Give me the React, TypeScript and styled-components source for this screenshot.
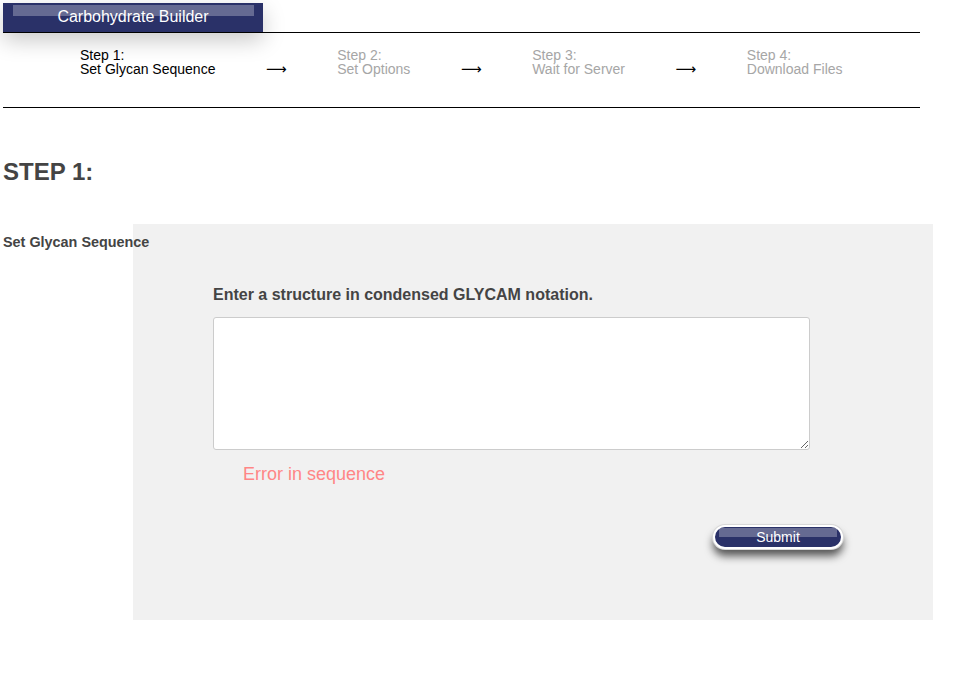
import React, { useState } from 'react';
import styled, { createGlobalStyle } from 'styled-components';

const GlobalStyle = createGlobalStyle`
  body {
    margin: 0;
    background: #fff;
    font-family: "Liberation Sans", Arial, sans-serif;
  }
`;

const Page = styled.div`
  padding: 3px;
`;

const Tab = styled.div`
  position: relative;
  z-index: 1;
  width: 260px;
  height: 29px;
  background: #2a3168;
  box-shadow: 0 8px 22px rgba(0, 0, 0, 0.22);
  color: #fff;
  font-size: 16px;
  line-height: 29px;
  text-align: center;
  &::before {
    content: '';
    position: absolute;
    left: 10px;
    right: 9px;
    top: 2px;
    height: 11px;
    background: rgba(255, 255, 255, 0.28);
  }
  span {
    position: relative;
    top: -1px;
  }
`;

const StepNav = styled.nav`
  width: 917px;
  height: 76px;
  border-top: 1px solid #000;
  border-bottom: 1px solid #000;
  display: flex;
  align-items: flex-start;
  gap: 50.5px;
  padding: 15px 0 0 77px;
  box-sizing: border-box;
`;

const Step = styled.div<{ $active?: boolean }>`
  font-size: 14px;
  line-height: 14px;
  color: ${(p) => (p.$active ? '#000' : '#a6a6a6')};
`;

const Arrow = styled.div`
  font-family: "DejaVu Sans", sans-serif;
  font-size: 14.5px;
  line-height: 14px;
  margin-top: 14px;
  color: #000;
`;

const Heading = styled.h2`
  margin: 50px 0 38px;
  font-size: 24px;
  font-weight: bold;
  color: #444;
`;

const Section = styled.div`
  display: grid;
  grid-template-columns: 130px 800px;
`;

const SectionLabel = styled.div`
  font-size: 14.4px;
  font-weight: bold;
  color: #444;
  padding-top: 10px;
  white-space: nowrap;
  position: relative;
  z-index: 1;
`;

const Panel = styled.div`
  background: #f1f1f1;
  height: 396px;
  padding: 62px 0 0 80px;
  box-sizing: border-box;
`;

const FieldLabel = styled.label`
  display: block;
  font-size: 16px;
  font-weight: bold;
  color: #444;
  margin-bottom: 13px;
`;

const SequenceInput = styled.textarea`
  display: block;
  width: 597px;
  height: 133px;
  box-sizing: border-box;
  border: 1px solid #ccc;
  border-radius: 3px;
  background: #fff;
  outline: none;
  font-family: "Liberation Mono", monospace;
  font-size: 14px;
  padding: 6px;
  margin: 0;
`;

const ErrorText = styled.p`
  margin: 14px 0 0 30px;
  font-size: 18px;
  color: #ff8686;
`;

const SubmitRow = styled.div`
  width: 630px;
  display: flex;
  justify-content: flex-end;
  margin-top: 40px;
`;

const SubmitButton = styled.button`
  position: relative;
  width: 130px;
  height: 24px;
  border: 2px solid #fff;
  border-radius: 12px;
  background: #2a3168;
  color: #fff;
  font-family: "Liberation Sans", Arial, sans-serif;
  font-size: 14px;
  line-height: 18px;
  padding: 0;
  cursor: pointer;
  overflow: hidden;
  box-shadow: 0 0 0 1px #d8d8d8, 0 7px 8px rgba(0, 0, 0, 0.65);
  &::before {
    content: '';
    position: absolute;
    left: 4px;
    right: 4px;
    top: 1px;
    height: 9px;
    background: rgba(255, 255, 255, 0.28);
  }
  span {
    position: relative;
  }
`;

const steps = [
  { num: 1, title: 'Set Glycan Sequence' },
  { num: 2, title: 'Set Options' },
  { num: 3, title: 'Wait for Server' },
  { num: 4, title: 'Download Files' },
];

const App = () => {
  const [sequence, setSequence] = useState('');

  const handleChange = (event: React.ChangeEvent<HTMLTextAreaElement>) => {
    setSequence(event.target.value);
  };

  return (
    <Page>
      <GlobalStyle />
      <Tab>
        <span>Carbohydrate Builder</span>
      </Tab>
      <StepNav>
        {steps.map((step, i) => (
          <React.Fragment key={step.num}>
            {i > 0 && <Arrow>⟶</Arrow>}
            <Step $active={i === 0}>
              Step {step.num}:
              <br />
              {step.title}
            </Step>
          </React.Fragment>
        ))}
      </StepNav>
      <Heading>STEP 1:</Heading>
      <Section>
        <SectionLabel>Set Glycan Sequence</SectionLabel>
        <Panel>
          <FieldLabel htmlFor="sequence">Enter a structure in condensed GLYCAM notation.</FieldLabel>
          <SequenceInput id="sequence" value={sequence} onChange={handleChange} />
          <ErrorText>Error in sequence</ErrorText>
          <SubmitRow>
            <SubmitButton type="button">
              <span>Submit</span>
            </SubmitButton>
          </SubmitRow>
        </Panel>
      </Section>
    </Page>
  );
};

export default App;
